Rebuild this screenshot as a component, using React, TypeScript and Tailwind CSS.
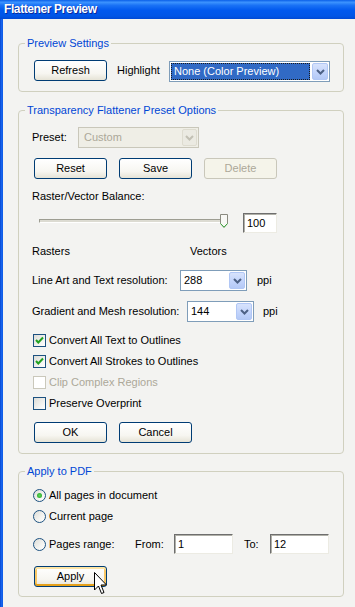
import React from 'react'

function Chevron({ color = '#4d6185' }: { color?: string }) {
  return (
    <svg width="9" height="6" viewBox="0 0 9 6">
      <path d="M1 1 L4.5 4.5 L8 1" stroke={color} strokeWidth="2" fill="none" />
    </svg>
  )
}

function XpButton({ label, disabled, hot }: { label: string; disabled?: boolean; hot?: boolean }) {
  if (disabled) {
    return (
      <div className="w-[73px] h-[21px] rounded-[3px] border border-[#c9c7ba] bg-[#f5f4ea] text-[#aca899] flex items-center justify-center">
        {label}
      </div>
    )
  }
  return (
    <div
      className={
        hot
          ? 'w-[73px] h-[21px] rounded-[3px] border border-[#003c74] bg-[linear-gradient(180deg,#ffffff_0%,#f7f6f1_65%,#e6e3d6_100%)] shadow-[inset_0_2px_0_#fde5a5,inset_0_-2px_0_#e5a01a,inset_2px_0_0_#f8c766,inset_-2px_0_0_#f8c766] flex items-center justify-center'
          : 'w-[73px] h-[21px] rounded-[3px] border border-[#003c74] bg-[linear-gradient(180deg,#ffffff_0%,#f7f6f1_65%,#e6e3d6_100%)] flex items-center justify-center'
      }
    >
      {label}
    </div>
  )
}

function Checkbox({ checked, disabled }: { checked?: boolean; disabled?: boolean }) {
  return (
    <div
      className={
        disabled
          ? 'w-[13px] h-[13px] border border-[#cac8bb] bg-white shrink-0'
          : 'w-[13px] h-[13px] border border-[#1c5180] bg-[linear-gradient(135deg,#dcdcd7_0%,#f2f2ef_60%,#ffffff_100%)] shrink-0 flex items-center justify-center'
      }
    >
      {checked && (
        <svg width="11" height="11" viewBox="0 0 11 11">
          <path d="M2 5 L4.3 7.5 L9 2.5" stroke="#21a121" strokeWidth="2" fill="none" />
        </svg>
      )}
    </div>
  )
}

function Radio({ checked }: { checked?: boolean }) {
  return (
    <div className="w-[13px] h-[13px] rounded-full border border-[#1c5180] bg-[linear-gradient(135deg,#dcdcd7_0%,#f4f4f1_60%,#ffffff_100%)] shrink-0 flex items-center justify-center">
      {checked && <div className="w-[5px] h-[5px] rounded-full bg-[radial-gradient(circle,#5ed65a_0%,#21a121_100%)]" />}
    </div>
  )
}

function Sunken({ value, w }: { value: string; w: string }) {
  return (
    <div
      className={`${w} h-[20px] bg-white border border-t-[#6e6e6e] border-l-[#6e6e6e] border-b-[#ecebe3] border-r-[#ecebe3] shadow-[inset_1px_1px_0_#b0b0a8] pl-[3px] flex items-center`}
    >
      {value}
    </div>
  )
}

function Select({ value, w }: { value: string; w: string }) {
  return (
    <div className={`${w} h-[21px] border border-[#7f9db9] bg-white p-[1px] flex`}>
      <div className="flex-1 pl-[2px] flex items-center">{value}</div>
      <div className="w-[16px] rounded-[2px] border border-[#b1c7f5] bg-[linear-gradient(180deg,#d8e3fc_0%,#c1d3fb_60%,#b4c9f6_100%)] flex items-center justify-center">
        <Chevron />
      </div>
    </div>
  )
}

function Group({ title, children }: { title: string; children: React.ReactNode }) {
  return (
    <fieldset className="w-[326px] border border-[#d0d0bf] rounded-[4px]">
      <legend className="ml-[6px] px-[2px] text-[#0046d5] leading-[13px]">{title}</legend>
      {children}
    </fieldset>
  )
}

export default function App() {
  return (
    <div className="relative w-[355px] h-[607px] overflow-hidden bg-[#f3f3f1] flex flex-col font-['Liberation_Sans',Arial,sans-serif] text-[11px] leading-[13px] text-black">
      {/* Title bar */}
      <div className="h-[19px] shrink-0 bg-[linear-gradient(180deg,#0a5fe8_0%,#3c93fe_12%,#1a72f5_28%,#0058ee_55%,#0055e6_85%,#0048d4_100%)] flex items-center pl-[4px]">
        <span className="text-white font-bold text-[12px] tracking-[-0.4px] [text-shadow:1px_1px_0_#0a2a9a]">Flattener Preview</span>
      </div>

      <div className="flex flex-1">
        <div className="w-[3px] bg-[linear-gradient(90deg,#0846d0,#1663ec_50%,#0d5ae6)]" />

        <div className="flex-1 flex flex-col pl-[15px]">
          {/* Preview Settings */}
          <div className="mt-[18px]">
            <Group title="Preview Settings">
              <div className="pl-[15px] pt-[10px] pb-[9px] flex items-start">
                <XpButton label="Refresh" />
                <div className="ml-[10px] w-[52px] h-[21px] flex items-center">Highlight</div>
                <div className="mt-[1px] w-[161px] h-[21px] border border-[#7f9db9] bg-white p-[1px] flex">
                  <div className="flex-1 bg-[#316ac5] border border-dotted border-[#1a1a1a] text-white pl-[2px] flex items-center">
                    None (Color Preview)
                  </div>
                  <div className="ml-[2px] w-[16px] rounded-[2px] border border-[#b1c7f5] bg-[linear-gradient(180deg,#d8e3fc_0%,#c1d3fb_60%,#b4c9f6_100%)] flex items-center justify-center">
                    <Chevron />
                  </div>
                </div>
              </div>
            </Group>
          </div>

          {/* Transparency Flattener Preset Options */}
          <div className="mt-[12px]">
            <Group title="Transparency Flattener Preset Options">
              <div className="pl-[13px] pt-[10px] pb-[10px] flex flex-col">
                <div className="h-[21px] flex items-center">
                  <div className="w-[46px]">Preset:</div>
                  <div className="w-[121px] h-[21px] border border-[#c9c7ba] bg-[#efeee6] p-[1px] flex text-[#aca899]">
                    <div className="flex-1 pl-[4px] flex items-center">Custom</div>
                    <div className="w-[15px] rounded-[2px] border border-[#dedcd0] bg-[#ebeae2] flex items-center justify-center">
                      <Chevron color="#c2c0b4" />
                    </div>
                  </div>
                </div>

                <div className="mt-[10px] flex">
                  <div className="ml-[2px]">
                    <XpButton label="Reset" />
                  </div>
                  <div className="ml-[12px]">
                    <XpButton label="Save" />
                  </div>
                  <div className="ml-[12px]">
                    <XpButton label="Delete" disabled />
                  </div>
                </div>

                <div className="mt-[11px] h-[13px]">Raster/Vector Balance:</div>

                <div className="mt-[10px] h-[20px] flex items-start">
                  <div className="relative ml-[7px] mt-[6px] w-[183px] h-[4px] border border-t-[#9d9d92] border-l-[#9d9d92] border-b-white border-r-white bg-[#dcdbd2]">
                    <svg className="absolute left-[180px] top-[-6px]" width="8" height="14" viewBox="0 0 8 14">
                      <path d="M0.5 0.5 H7.5 V9.5 L4 13.3 L0.5 9.5 Z" fill="#f8f8f5" stroke="#8a8a80" />
                      <path d="M0.5 9.5 L4 13.3 L7.5 9.5" fill="none" stroke="#3aa83a" />
                    </svg>
                  </div>
                  <div className="ml-[21px]">
                    <Sunken value="100" w="w-[34px]" />
                  </div>
                </div>

                <div className="mt-[12px] h-[13px] flex">
                  <div className="w-[158px]">Rasters</div>
                  <div>Vectors</div>
                </div>

                <div className="mt-[12px] h-[21px] flex items-center">
                  <div className="w-[148px]">Line Art and Text resolution:</div>
                  <Select value="288" w="w-[67px]" />
                  <div className="ml-[10px]">ppi</div>
                </div>

                <div className="mt-[10px] h-[21px] flex items-center">
                  <div className="w-[155px]">Gradient and Mesh resolution:</div>
                  <Select value="144" w="w-[67px]" />
                  <div className="ml-[9px]">ppi</div>
                </div>

                <div className="mt-[11px] h-[14px] flex items-center pl-[1px]">
                  <Checkbox checked />
                  <span className="ml-[3px]">Convert All Text to Outlines</span>
                </div>
                <div className="mt-[7px] h-[14px] flex items-center pl-[1px]">
                  <Checkbox checked />
                  <span className="ml-[3px]">Convert All Strokes to Outlines</span>
                </div>
                <div className="mt-[7px] h-[14px] flex items-center pl-[1px]">
                  <Checkbox disabled />
                  <span className="ml-[3px] text-[#aca899]">Clip Complex Regions</span>
                </div>
                <div className="mt-[7px] h-[14px] flex items-center pl-[1px]">
                  <Checkbox />
                  <span className="ml-[3px]">Preserve Overprint</span>
                </div>

                <div className="mt-[12px] flex">
                  <div className="ml-[2px]">
                    <XpButton label="OK" />
                  </div>
                  <div className="ml-[12px]">
                    <XpButton label="Cancel" />
                  </div>
                </div>
              </div>
            </Group>
          </div>

          {/* Apply to PDF */}
          <div className="mt-[11px]">
            <Group title="Apply to PDF">
              <div className="pl-[13px] pt-[10px] pb-[9px] flex flex-col">
                <div className="h-[14px] flex items-center pl-[1px]">
                  <Radio checked />
                  <span className="ml-[3px]">All pages in document</span>
                </div>
                <div className="mt-[7px] h-[14px] flex items-center pl-[1px]">
                  <Radio />
                  <span className="ml-[3px]">Current page</span>
                </div>
                <div className="mt-[11px] h-[20px] flex items-center pl-[1px]">
                  <div className="w-[102px] flex items-center">
                    <Radio />
                    <span className="ml-[3px]">Pages range:</span>
                  </div>
                  <div className="w-[39px]">From:</div>
                  <Sunken value="1" w="w-[59px]" />
                  <div className="ml-[11px] w-[26px]">To:</div>
                  <Sunken value="12" w="w-[59px]" />
                </div>
                <div className="mt-[12px] ml-[2px]">
                  <XpButton label="Apply" hot />
                </div>
              </div>
            </Group>
          </div>
        </div>
      </div>

      {/* Mouse pointer */}
      <svg className="absolute left-[94px] top-[572px]" width="13" height="23" viewBox="0 0 13 23">
        <path
          d="M0.5 0.5 V18 L4.5 14 L7.5 21.5 L10 20.5 L7 13 L12.5 13 Z"
          fill="#ffffff"
          stroke="#000000"
          strokeLinejoin="miter"
        />
      </svg>
    </div>
  )
}
